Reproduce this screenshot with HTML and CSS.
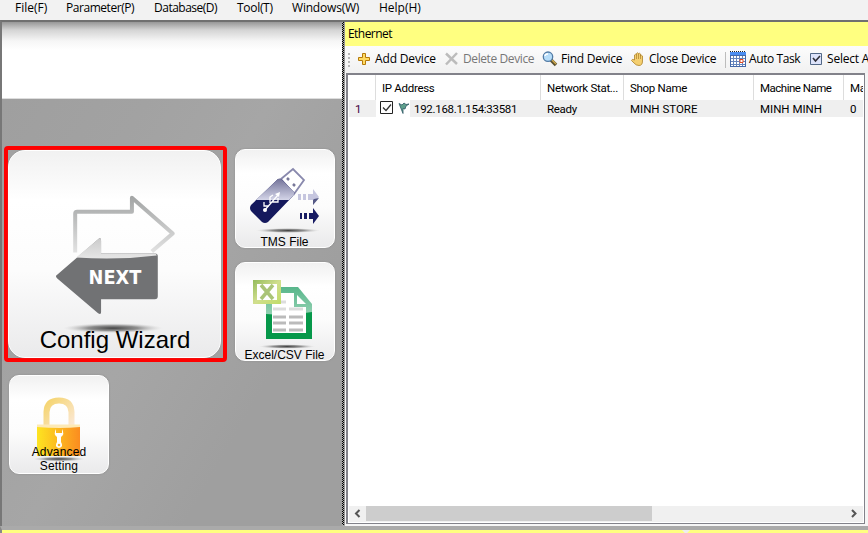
FILE: index.html
```
<!DOCTYPE html>
<html lang="en">
<head>
<meta charset="utf-8">
<title>Device Manager</title>
<link rel="stylesheet" href="styles.css">
</head>
<body>
<div class="app">
  <nav class="menu"><span class="m1">File(F)</span><span class="m2">Parameter(P)</span><span class="m3">Database(D)</span><span class="m4">Tool(T)</span><span class="m5">Windows(W)</span><span class="m6">Help(H)</span></nav>
  <main class="work">
    <aside class="side">
      <div class="banner"></div>
      <div class="tiles">
        <div class="focus"><div class="tile big">
          <svg class="art" viewBox="8 150 213 209">
            <defs>
              <linearGradient id="arrow" x1="0" y1="0" x2="0" y2="1"><stop offset="0" stop-color="#a4a6a6"/><stop offset="1" stop-color="#e2e2e2"/></linearGradient>
              <radialGradient id="shade"><stop offset="0" stop-color="#444"/><stop offset=".5" stop-color="#777" stop-opacity=".8"/><stop offset="1" stop-color="#ccc" stop-opacity="0"/></radialGradient>
              <linearGradient id="tip" x1="0" y1="0" x2="0" y2="1"><stop offset="0" stop-color="#cbcbcb"/><stop offset="1" stop-color="#e6e6e6"/></linearGradient>
            </defs>
            <path d="M75 253V214Q75 212 77 212H132V198L173 234L152 252" fill="none" stroke="url(#arrow)" stroke-width="4" stroke-linejoin="round"/>
            <path d="M56 276L99 239Q101 238 101 241V254H156Q158 254 158 257V297Q158 300 155 300H101V313Q101 316 98 314L57 279Q55 277 56 276Z" fill="#717274"/>
            <path d="M76 258L99 239Q101 238 101 241V254H156L157 256Q117 261 76 258Z" fill="url(#tip)"/>
            <ellipse cx="113" cy="329" rx="50" ry="5" fill="url(#shade)"/>
            <text x="88.500" y="284.500" class="next" textLength="53" lengthAdjust="spacingAndGlyphs">NEXT</text>
          </svg>
          <span class="caption">Config Wizard</span>
        </div></div>
        <div class="tile">
          <svg class="art" viewBox="235 149 100 99">
            <defs><linearGradient id="usb" x1="0" y1="0" x2="0" y2="1"><stop offset="0" stop-color="#737399"/><stop offset="1" stop-color="#d4d5e8"/></linearGradient></defs>
            <path d="M281 179L293 169L304 180L294 194Z" fill="#fff" stroke="#8989ad" stroke-width="1.800"/>
            <path d="M287 178l2 2M293 184l2 2" stroke="#777799" stroke-width="2.500"/>
            <path d="M278 179Q280 178 282 180L294 192Q295 194 293 196L268 222Q265 224 262 222L251 211Q249 208 251 205Z" fill="#15195d"/>
            <path d="M278 179Q280 178 282 180L294 192Q295 194 293 196L289 200Q274 200 256 200Z" fill="url(#usb)"/>
            <path d="M264 211L278 195M269 206H264V202M270 203V197L273 195M272 202H278V198" fill="none" stroke="#fff" stroke-width="1.300"/>
            <circle cx="265" cy="210" r="2" fill="#fff"/><path d="M275 194l5-2-1 5z" fill="#fff"/>
            <path d="M298 194h3v6h-3zM303 194h3v6h-3zM308 194h5v-5l6 8-6 8v-5h-5z" fill="#c6c6df"/>
            <path d="M314 199l5-1-6 7v-5z" fill="#555986"/>
            <path d="M300 213h2v6h-2zM304 213h3v6h-3zM309 213h4v-5l6 8-6 8v-5h-4z" fill="#171b63"/>
            <ellipse cx="288" cy="230.500" rx="32" ry="2.500" fill="url(#shade)"/>
          </svg>
          <span class="caption">TMS File</span>
        </div>
        <div class="tile">
          <svg class="art" viewBox="235 262 100 99">
            <defs>
              <linearGradient id="sheet" x1="0" y1="0" x2="0" y2="1"><stop offset="0" stop-color="#58b68b"/><stop offset="1" stop-color="#c6e8d4"/></linearGradient>
              <linearGradient id="xl" x1="0" y1="0" x2="1" y2="1"><stop offset="0" stop-color="#94bb5c"/><stop offset=".5" stop-color="#d1df8e"/><stop offset="1" stop-color="#c0dc67"/></linearGradient>
            </defs>
            <path d="M266 287H298L312 304V339H266Z" fill="url(#sheet)"/>
            <path d="M266 314Q291 316 312 312V339H266Z" fill="#06984a"/>
            <path d="M272 293H294V307H306V333H272Z" fill="#fff"/>
            <path d="M297 295V304H306Z" fill="#fff"/>
            <path d="M273 302h13M273 309h13M289 309h14" stroke="#ddd" stroke-width="3"/>
            <path d="M273 317h13m3 0h14M273 323h13m3 0h14M273 330h13m3 0h14" stroke="#bbb" stroke-width="3"/>
            <path d="M253 280H281V304H253Z" fill="url(#xl)"/><path d="M257 284H277V300H257Z" fill="#fff"/>
            <path d="M261 285L273 299M273 285L261 299" stroke="#aac477" stroke-width="3.500"/>
            <ellipse cx="287" cy="346.500" rx="28" ry="2.300" fill="url(#shade)"/>
          </svg>
          <span class="caption tight">Excel/CSV File</span>
        </div>
        <div class="tile setting">
          <svg class="art" viewBox="9 375 100 99">
            <defs>
              <linearGradient id="lock"><stop offset="0" stop-color="#fde421"/><stop offset="1" stop-color="#fb8c20"/></linearGradient>
              <linearGradient id="hoop" x1="0" y1="0" x2="1" y2="1"><stop offset="0" stop-color="#f5d46d"/><stop offset="1" stop-color="#fbe8d6"/></linearGradient>
            </defs>
            <path d="M46.500 427V412Q47 400.500 59 400.500Q71 400.500 71.500 412V427" fill="none" stroke="url(#hoop)" stroke-width="6"/>
            <ellipse cx="59" cy="459" rx="26" ry="2.500" fill="url(#shade)"/>
            <path d="M37 426H80V456H37Z" fill="url(#lock)"/><path d="M37 424.500H80V427Q60 429 37 427Z" fill="#fde9b4"/>
            <path d="M56 429Q53 434 57 437V442Q54 447 59 448Q64 447 61 442V437Q65 434 62 429V433H56Z" fill="#fff"/><circle cx="59" cy="445" r="1.300" fill="#f7b52c"/>
          </svg>
          <span class="caption two">Advanced<br>Setting</span>
        </div>
      </div>
    </aside>
    <div class="splitter"></div>
    <section class="panel">
      <h1 class="title">Ethernet</h1>
      <div class="tools">
        <i class="grip"></i>
        <svg class="ic" width="16" height="16"><path d="M6.500 2.500h3v4h4v3h-4v4h-3v-4h-4v-3h4z" fill="#ffdb63" stroke="#b57a0c"/></svg><span class="t1">Add Device</span>
        <svg class="ic" width="16" height="16"><path d="M2 2.500L13 13M13 2L2 13.500" stroke="#bcbcbc" stroke-width="2.500"/></svg><span class="t2">Delete Device</span>
        <svg class="ic" width="16" height="16"><path d="M9 9l5 5" stroke="#5b5131" stroke-width="3.500"/><path d="M10 9l4 4" stroke="#d4ac4d" stroke-width="1.500"/><circle cx="6" cy="5.700" r="4.700" fill="#b6ddf9" stroke="#527ba5" stroke-width="1.300"/><path d="M3 5q0-2 3-2" stroke="#fff" fill="none" stroke-width="1.500"/></svg><span class="t3">Find Device</span>
        <svg class="ic" width="16" height="16"><path d="M4.500 9V4q1-1.500 2 0V2.500q1-1.500 2 0V3q1-1.500 2 0V5q1-1.500 2 0V10Q12.500 14.500 9 14.500Q6 14.500 4 12L1.500 9.500Q2 7.500 4.500 9Z" fill="#f4cf70" stroke="#ad8129" stroke-width=".8"/><path d="M6.500 4v4M8.500 3v5M10.500 4v4" stroke="#ad8129" stroke-width=".7"/></svg><span class="t4">Close Device</span>
        <i class="sep"></i>
        <svg class="ic cal" width="16" height="16"><path d="M0 1h16v15H0z" fill="#4568a9"/><path d="M0 1h16v3H0z" fill="#4b8df1"/><path d="M1 5h14v10H1z" fill="#fff"/><path d="M1 7.500h14M1 10.500h14M1 13.500h14M3.500 5v10M6.500 5v10M9.500 5v10M12.500 5v10" stroke="#6585bd"/><path d="M0 .5h16" stroke="#222" stroke-dasharray="1 1"/><path d="M10 8.500h3v3h-3z" fill="#fff" stroke="#e24a23"/></svg><span class="t5">Auto Task</span>
        <svg class="ic" width="16" height="16"><path d="M2.500 2.500h11v11h-11z" fill="#dde3fa" stroke="#526887"/><path d="M5 7l2.500 3L12 5" fill="none" stroke="#303039" stroke-width="1.600"/></svg><span class="t6">Select All</span>
      </div>
      <div class="table">
        <div class="row head"><span>&nbsp;</span><span>IP Address</span><span>Network Stat...</span><span class="shop">Shop Name</span><span class="machine">Machine Name</span><span>Mac</span></div>
        <div class="row data"><span class="num">1</span><span class="ip"><svg width="34" height="17"><path d="M4.500 1.500h12v12h-12z" fill="#fff" stroke="#222"/><path d="M7 7.500l3 3 5-6" fill="none" stroke="#333" stroke-width="1.300"/><path d="M23 3.500l3 1.500 2-2 2 1.500 3-.5-3 2-1 3-2-.5v5z" fill="#5fa08c" stroke="#2d5864" stroke-width=".8"/></svg><b>192.168.1.154:33581</b></span><span>Ready</span><span class="store">MINH STORE</span><span class="store">MINH MINH</span><span>0</span></div>
        <div class="blank"></div>
        <div class="scroll"><svg width="17" height="15"><path d="M10.500 4L7 7.500l3.500 3.500" fill="none" stroke="#555" stroke-width="2"/></svg><i class="thumb"></i><svg width="17" height="15"><path d="M6 4l3.500 3.500L6 11" fill="none" stroke="#555" stroke-width="2"/></svg></div>
      </div>
    </section>
  </main>
  <footer class="foot"><i></i></footer>
</div>
</body>
</html>
```
FILE: styles.css
```
* { box-sizing: border-box; }
body { margin: 0; width: 868px; height: 533px; overflow: hidden; background: #f0f0f0; color: #000; font: 12px "Open Sans", sans-serif; }
.app { display: flex; flex-direction: column; height: 533px; }
.menu { display: flex; flex: none; height: 20px; padding-left: 15px; background: #f2f2f2; line-height: 16px; white-space: nowrap; }
.m1 { width: 51px; }
.m2 { width: 88px; letter-spacing: -.45px; }
.m3 { width: 83px; letter-spacing: -.5px; }
.m4 { width: 55px; letter-spacing: -.3px; }
.m5 { width: 87px; letter-spacing: -.2px; }
.work { display: flex; height: 506px; border-top: 2px solid #707070; border-left: 2px solid #777; background: #a8a8a8; }
.side { width: 340px; height: 504px; background: linear-gradient(120deg, #9e9e9e, #a2a2a2 30%, #a6a6a6 50%, #9f9f9f 75%); }
.banner { height: 77px; border-bottom: 1px solid #ddd; background: linear-gradient(#989898, #d4d4d4 8px, #f6f6f6 19px, #fff 28px); }
.tiles { display: grid; grid-template: repeat(3, 99px) / 223px 100px; column-gap: 8px; row-gap: 14px; padding: 50px 0 0 2px; }
.focus { grid-row: span 2; margin: -3px 0 -1px; border: 4px solid #f00; border-radius: 4px; background: #a2a2a2; padding-right: 2px; }
.tile { position: relative; border: 1px solid #fff; border-radius: 10px; background: linear-gradient(#f1f1f1, #fff 24%, #fcfcfc 58%, #eaeaeb); box-shadow: 0 0 2px #888; width: 100px; height: 99px; text-align: center; }
.big { width: 213px; height: 208px; border-radius: 17px; box-shadow: 0 0 1px #888; }
.setting { margin-left: 5px; }
.art { position: absolute; left: -1px; top: -1px; width: calc(100% + 2px); height: calc(100% + 2px); }
.next { font: bold 20px "DejaVu Sans", sans-serif; fill: #fff; }
.caption { position: absolute; left: 0; right: 1px; bottom: -2px; font: 12px/14px "Liberation Sans", sans-serif; white-space: nowrap; }
.big .caption { font-size: 24px; line-height: 28px; bottom: 3px; right: -1px; }
.tight { bottom: -2px; }
.two { bottom: 0; right: 0; letter-spacing: .15px; }
.splitter { width: 3px; height: 503px; border-right: 1px solid #999; background: repeating-conic-gradient(#000 0 25%, #aaa 0 50%) 0 0 / 2px 2px; }
.panel { display: flex; flex: 1; flex-direction: column; min-width: 0; background: #f5f5f5; }
.title { flex: none; height: 24px; margin: 0; padding-left: 3px; background: #ffff80; font-size: 12px; font-weight: 400; line-height: 23px; letter-spacing: -.55px; }
.tools { display: flex; flex: none; align-items: center; height: 27px; padding-left: 3px; background: linear-gradient(#fcfcfc, #f1f1f1); overflow: hidden; white-space: nowrap; }
.tools span { flex: none; line-height: 24px; margin: 0 7px 2px 3px; }
.ic { flex: none; margin-bottom: 1px; }
.grip { flex: none; width: 2px; height: 14px; margin: 0 6px 0 0; background: repeating-linear-gradient(#b7b7b7 0 2px, transparent 2px 4px); }
.sep { flex: none; width: 1px; height: 16px; margin: 0 4px 0 1px; background: #bcbcbc; }
.tools .t1 { width: 62px; letter-spacing: -.15px; }
.tools .t2 { width: 72px; color: #777; letter-spacing: -.4px; }
.tools .t3 { width: 62px; letter-spacing: -.25px; }
.tools .t4 { width: 68px; letter-spacing: -.25px; }
.tools .t5 { width: 52px; letter-spacing: -.4px; }
.tools .t6 { letter-spacing: -.2px; }
.table { display: flex; flex-direction: column; width: 519px; height: 451px; margin-left: 1px; padding: 1px 1px 1px 2px; border: 1px solid #82828a; box-shadow: inset 1px 1px #82828a; background: #fff; font: 12px/16px "Roboto", sans-serif; }
.row { display: grid; grid-template-columns: 27px 165px 83px 130px 90px 19px; white-space: nowrap; }
.row span { overflow: hidden; padding-left: 6px; }
.head { height: 25px; line-height: 27px; font-size: 11.5px; letter-spacing: -.3px; }
.head span { border-right: 1px solid #ddd; height: 25px; }
.head .machine { letter-spacing: -.5px; }
.head span:last-child { border: 0; }
.data { height: 17px; background: #efefef; font-size: 11.5px; line-height: 18px; letter-spacing: -.3px; }
.data .store { letter-spacing: 0; }
.num { color: #400040; }
.row .ip { display: flex; padding: 0; }
.ip svg { background: #fff; }
.ip b { padding-left: 4px; font-weight: 400; }
.blank { flex: 1; }
.scroll { display: flex; justify-content: space-between; height: 16px; background: #f0f0f0; }
.thumb { width: 286px; height: 15px; margin-right: auto; background: #cdcdcd; }
.foot { height: 7px; border-top: 4px solid #aaa; border-left: 2px solid #888; background: #ffff80; }
.foot i { display: block; width: 8px; height: 3px; margin-left: 680px; background: #eee; clip-path: polygon(0 0, 100% 0, 65% 100%, 35% 100%); }
```
